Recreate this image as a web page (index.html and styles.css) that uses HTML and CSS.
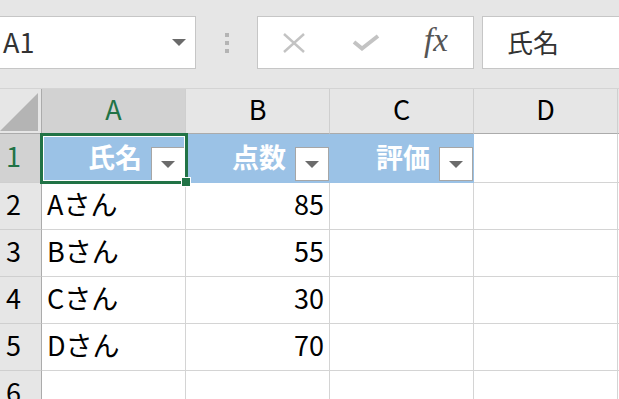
FILE: index.html
```html
<!DOCTYPE html>
<html lang="ja">
<head>
    <meta charset="UTF-8">
    <title>Sheet1</title>
    <link rel="stylesheet" href="styles.css">
</head>
<body>
    <div class="toolbar">
        <div class="namebox">
            <span>A1</span>
            <svg width="14" height="7" viewBox="0 0 14 7"><polygon points="0,0 14,0 7,7" fill="#6a6a6a"/></svg>
        </div>
        <div class="grip"><i></i><i></i><i></i></div>
        <div class="fbtns">
            <svg class="ico-x" width="22" height="20" viewBox="0 0 22 20">
                <line x1="1" y1="1" x2="21" y2="19" stroke="#c3c3c3" stroke-width="2.4"/>
                <line x1="21" y1="1" x2="1" y2="19" stroke="#c3c3c3" stroke-width="2.4"/>
            </svg>
            <svg class="ico-ok" width="28" height="17" viewBox="0 0 28 17">
                <polyline points="2,8 10,14.5 26,2" fill="none" stroke="#c3c3c3" stroke-width="4"/>
            </svg>
            <span class="fx">fx</span>
        </div>
        <div class="formula">氏名</div>
    </div>

    <div class="sheet">
        <div class="corner">
            <svg width="41" height="44" viewBox="0 0 41 44"><polygon points="0,42 38,42 38,4" fill="#b4b4b4"/></svg>
        </div>
        <div class="colhead sel">A</div>
        <div class="colhead">B</div>
        <div class="colhead">C</div>
        <div class="colhead">D</div>
        <div class="colhead"></div>

        <div class="rowhead sel">1</div>
        <div class="cell head active">
            <span>氏名</span><span class="filter"><i></i></span>
            <div class="selbox"><b></b></div>
        </div>
        <div class="cell head"><span>点数</span><span class="filter"><i></i></span></div>
        <div class="cell head"><span>評価</span><span class="filter"><i></i></span></div>
        <div class="cell"></div>
        <div class="cell"></div>

        <div class="rowhead">2</div>
        <div class="cell">Aさん</div>
        <div class="cell num">85</div>
        <div class="cell"></div>
        <div class="cell"></div>
        <div class="cell"></div>

        <div class="rowhead">3</div>
        <div class="cell">Bさん</div>
        <div class="cell num">55</div>
        <div class="cell"></div>
        <div class="cell"></div>
        <div class="cell"></div>

        <div class="rowhead">4</div>
        <div class="cell">Cさん</div>
        <div class="cell num">30</div>
        <div class="cell"></div>
        <div class="cell"></div>
        <div class="cell"></div>

        <div class="rowhead">5</div>
        <div class="cell">Dさん</div>
        <div class="cell num">70</div>
        <div class="cell"></div>
        <div class="cell"></div>
        <div class="cell"></div>

        <div class="rowhead">6</div>
        <div class="cell"></div>
        <div class="cell"></div>
        <div class="cell"></div>
        <div class="cell"></div>
        <div class="cell"></div>
    </div>
</body>
</html>
```

FILE: styles.css
```css
body {
    margin: 0;
    width: 619px;
    height: 399px;
    overflow: hidden;
    background-color: #e6e6e6;
    font-family: "Noto Sans CJK JP", sans-serif;
    color: #000;
}

/* formula bar */
.toolbar {
    height: 88px;
    box-sizing: border-box;
    padding-top: 16px;
    display: flex;
    align-items: flex-start;
}
.namebox,
.fbtns,
.formula {
    height: 53px;
    box-sizing: border-box;
    background: #fff;
    border: 1px solid #c6c6c6;
    display: flex;
    align-items: center;
}
.namebox {
    width: 196px;
    border-left: none;
    justify-content: space-between;
    padding: 0 9px 2px 3px;
    font-size: 27px;
    color: #333;
}
.namebox svg {
    margin-top: 2px;
}
.grip {
    width: 61px;
    height: 53px;
    display: flex;
    flex-direction: column;
    align-items: center;
    justify-content: center;
    gap: 4px;
}
.grip i {
    width: 4px;
    height: 4px;
    background: #b4b4b4;
}
.fbtns {
    width: 217px;
    padding-left: 25px;
}
.ico-ok {
    margin-left: 47px;
}
.fx {
    margin-left: 44px;
    font-family: "Liberation Serif", serif;
    font-style: italic;
    font-size: 33px;
    color: #555;
    margin-bottom: 4px;
}
.formula {
    flex: 1;
    margin-left: 8px;
    border-right: none;
    padding: 0 0 2px 24px;
    font-size: 26px;
    color: #333;
}

/* grid */
.sheet {
    display: grid;
    grid-template-columns: 42px repeat(4, 144px) 1fr;
    grid-template-rows: 45px 49px repeat(5, 47px);
    border-top: 1px solid #d4d4d4;
    background: #fff;
}
.sheet > div {
    box-sizing: border-box;
    border-right: 1px solid #d4d4d4;
    border-bottom: 1px solid #d4d4d4;
}
.sheet > .corner {
    background: #e6e6e6;
    border-right-color: #ababab;
    border-bottom-color: #ababab;
}
.corner svg {
    display: block;
}
.sheet > .colhead {
    background: #e6e6e6;
    border-right-color: #cfcfcf;
    border-bottom-color: #ababab;
    display: flex;
    align-items: center;
    justify-content: center;
    padding-bottom: 5px;
    font-size: 27px;
}
.sheet > .rowhead {
    background: #e6e6e6;
    border-right-color: #ababab;
    border-bottom-color: #cfcfcf;
    display: flex;
    align-items: center;
    padding: 0 0 5px 6px;
    font-size: 27px;
}
.sheet > .sel {
    background: #d2d2d2;
    color: #217346;
}
.cell {
    display: flex;
    align-items: center;
    padding: 0 5px 5px;
    font-size: 27px;
}
.cell.num {
    justify-content: flex-end;
}
.sheet > .head {
    background: #9bc2e6;
    border-right-color: #9bc2e6;
    border-bottom-color: #9bc2e6;
    color: #fff;
    font-weight: bold;
    justify-content: flex-end;
    gap: 9px;
    padding: 0 0 3px;
}
.filter {
    align-self: flex-end;
    margin-bottom: -2px;
    width: 34px;
    height: 34px;
    box-sizing: border-box;
    background: #fff;
    border: 1px solid #a6a6a6;
    display: flex;
    align-items: center;
    justify-content: center;
}
.filter i {
    width: 0;
    height: 0;
    border-left: 7px solid transparent;
    border-right: 7px solid transparent;
    border-top: 7px solid #6b6b6b;
}

/* active cell */
.active {
    position: relative;
}
.selbox {
    position: absolute;
    left: -2px;
    top: -1px;
    right: -3px;
    bottom: -2px;
    border: 3px solid #217346;
    box-shadow: inset 0 0 0 1px #fff;
}
.selbox b {
    position: absolute;
    right: -6px;
    bottom: -6px;
    width: 8px;
    height: 8px;
    background: #217346;
    border: 1px solid #fff;
}
```
